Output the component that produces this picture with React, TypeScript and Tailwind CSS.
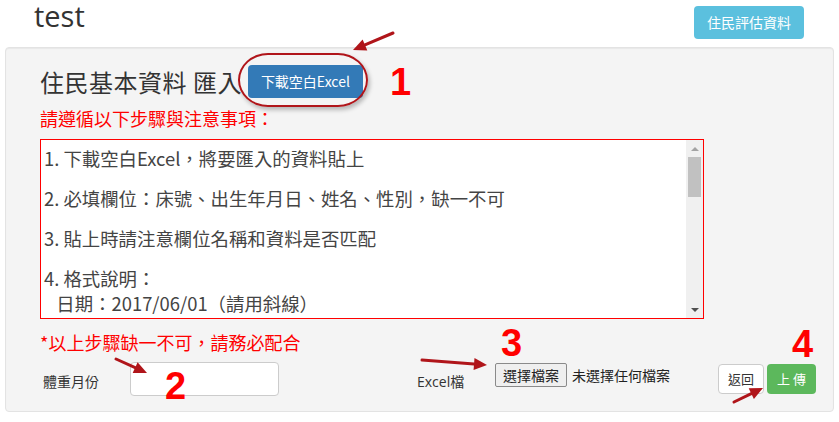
import React from 'react';

const cjk = { fontFamily: '"Noto Sans CJK TC", "Open Sans", sans-serif' };
const latin = { fontFamily: '"Open Sans", "Noto Sans CJK TC", sans-serif' };
const mark = { fontFamily: '"Liberation Sans", Arial, sans-serif' };

// red annotation arrow, drawn from tail to tip
function Arrow({ x1, y1, x2, y2 }: { x1: number; y1: number; x2: number; y2: number }) {
  const ang = Math.atan2(y2 - y1, x2 - x1);
  const len = 13;
  const w = 6;
  const bx = x2 - Math.cos(ang) * len;
  const by = y2 - Math.sin(ang) * len;
  const px = -Math.sin(ang) * w;
  const py = Math.cos(ang) * w;
  return (
    <g>
      <line x1={x1} y1={y1} x2={bx} y2={by} stroke="#b0151a" strokeWidth={3} strokeLinecap="round" />
      <polygon points={`${x2},${y2} ${bx + px},${by + py} ${bx - px},${by - py}`} fill="#b0151a" />
    </g>
  );
}

const steps = [
  ['1. 下載空白Excel，將要匯入的資料貼上'],
  ['2. 必填欄位：床號、出生年月日、姓名、性別，缺一不可'],
  ['3. 貼上時請注意欄位名稱和資料是否匹配'],
  ['4. 格式說明：', '\u00a0\u00a0\u00a0日期：2017/06/01（請用斜線）'],
];

export default function App() {
  return (
    <div className="relative w-[839px] h-[422px] bg-white overflow-hidden text-[#333]" style={cjk}>
      {/* Header */}
      <div className="flex items-start justify-between h-[47px] pl-[34px] pr-[35px]">
        <h1 className="text-[29px] leading-[32px] text-[#333]" style={latin}>test</h1>
        <button className="mt-[6px] w-[110px] h-[33px] rounded bg-[#5bc0de] text-white text-[14px]">
          住民評估資料
        </button>
      </div>

      {/* Well */}
      <div className="mx-[5px] w-[829px] h-[365px] bg-[#f4f4f4] border border-[#e3e3e3] rounded shadow-[inset_0_1px_1px_rgba(0,0,0,0.05)] pt-[17px] pl-[34px]">
        <div className="flex items-center h-[33px]">
          <span className="text-[24px] leading-[33px] text-[#333] tracking-[0.5px]">住民基本資料 匯入</span>
          <button className="ml-[6px] w-[115px] h-[33px] rounded bg-[#337ab7] text-white text-[14px]">
            下載空白Excel
          </button>
        </div>

        <div className="mt-[8px] text-[18px] leading-[24px] text-[#ff0000]">請遵循以下步驟與注意事項：</div>

        <div className="mt-[9px] w-[664px] h-[180px] border border-[#ff0000] bg-white flex">
          <div className="flex-1 overflow-hidden pl-[3px] pt-[6px] text-[18.4px] leading-[25px] text-[#444]">
            {steps.map((s, i) => (
              <div key={i} className="mb-[15px]">
                {s.map((l, j) => (
                  <div key={j} className="whitespace-pre">{l}</div>
                ))}
              </div>
            ))}
          </div>
          <div className="w-[17px] bg-[#f0f0f0] flex flex-col items-center">
            <div className="h-[17px] flex items-center justify-center">
              <div className="w-0 h-0 border-l-[4px] border-r-[4px] border-b-[4px] border-l-transparent border-r-transparent border-b-[#a3a3a3]" />
            </div>
            <div className="w-[13px] h-[40px] bg-[#c1c1c1]" />
            <div className="flex-1" />
            <div className="h-[17px] flex items-center justify-center">
              <div className="w-0 h-0 border-l-[4px] border-r-[4px] border-t-[4px] border-l-transparent border-r-transparent border-t-[#505050]" />
            </div>
          </div>
        </div>

        <div className="mt-[11px] text-[18px] leading-[24px] text-[#ff0000]">*以上步驟缺一不可，請務必配合</div>

        <div className="mt-[8px] flex items-center h-[34px] text-[14px]">
          <span className="ml-[3px] w-[87px] mt-[4px] text-[#333]">體重月份</span>
          <input className="w-[149px] h-[34px] bg-white border border-[#ccc] rounded outline-none" />
          <span className="ml-[138px] w-[78px] mt-[5px] text-[#333]" style={latin}>Excel檔</span>
          <div className="flex items-center -mt-[8px]">
            <button className="w-[72px] h-[24px] bg-[#efefef] border border-[#8a8a8a] rounded-[2px] text-[14px] text-[#222]">
              選擇檔案
            </button>
            <span className="ml-[5px] text-[#222]">未選擇任何檔案</span>
          </div>
          <button className="ml-[48px] w-[46px] h-[30px] bg-white border border-[#ccc] rounded text-[13px] text-[#333]">
            返回
          </button>
          <button className="ml-[3px] w-[49px] h-[30px] bg-[#5cb85c] rounded text-[13px] text-white tracking-[3px] pl-[3px]">
            上傳
          </button>
        </div>
      </div>

      {/* Annotations */}
      <div className="absolute left-[238px] top-[53px] w-[130px] h-[54px] border-2 border-[#b0151a] rounded-[30px/27px] shadow-[2px_3px_4px_rgba(0,0,0,0.25)]" />
      <span className="absolute left-[390px] top-[62px] text-[38px] font-bold text-[#ff0000] leading-[40px]" style={mark}>1</span>
      <span className="absolute left-[165px] top-[366px] text-[38px] font-bold text-[#ff0000] leading-[40px]" style={mark}>2</span>
      <span className="absolute left-[501px] top-[323px] text-[38px] font-bold text-[#ff0000] leading-[40px]" style={mark}>3</span>
      <span className="absolute left-[792px] top-[324px] text-[38px] font-bold text-[#ff0000] leading-[40px]" style={mark}>4</span>
      <svg className="absolute left-0 top-0 pointer-events-none" width={839} height={422}>
        <Arrow x1={393} y1={33} x2={353} y2={50} />
        <Arrow x1={116} y1={359} x2={147} y2={373} />
        <Arrow x1={422} y1={360} x2={487} y2={365} />
        <Arrow x1={734} y1={402} x2={763} y2={388} />
      </svg>
    </div>
  );
}
